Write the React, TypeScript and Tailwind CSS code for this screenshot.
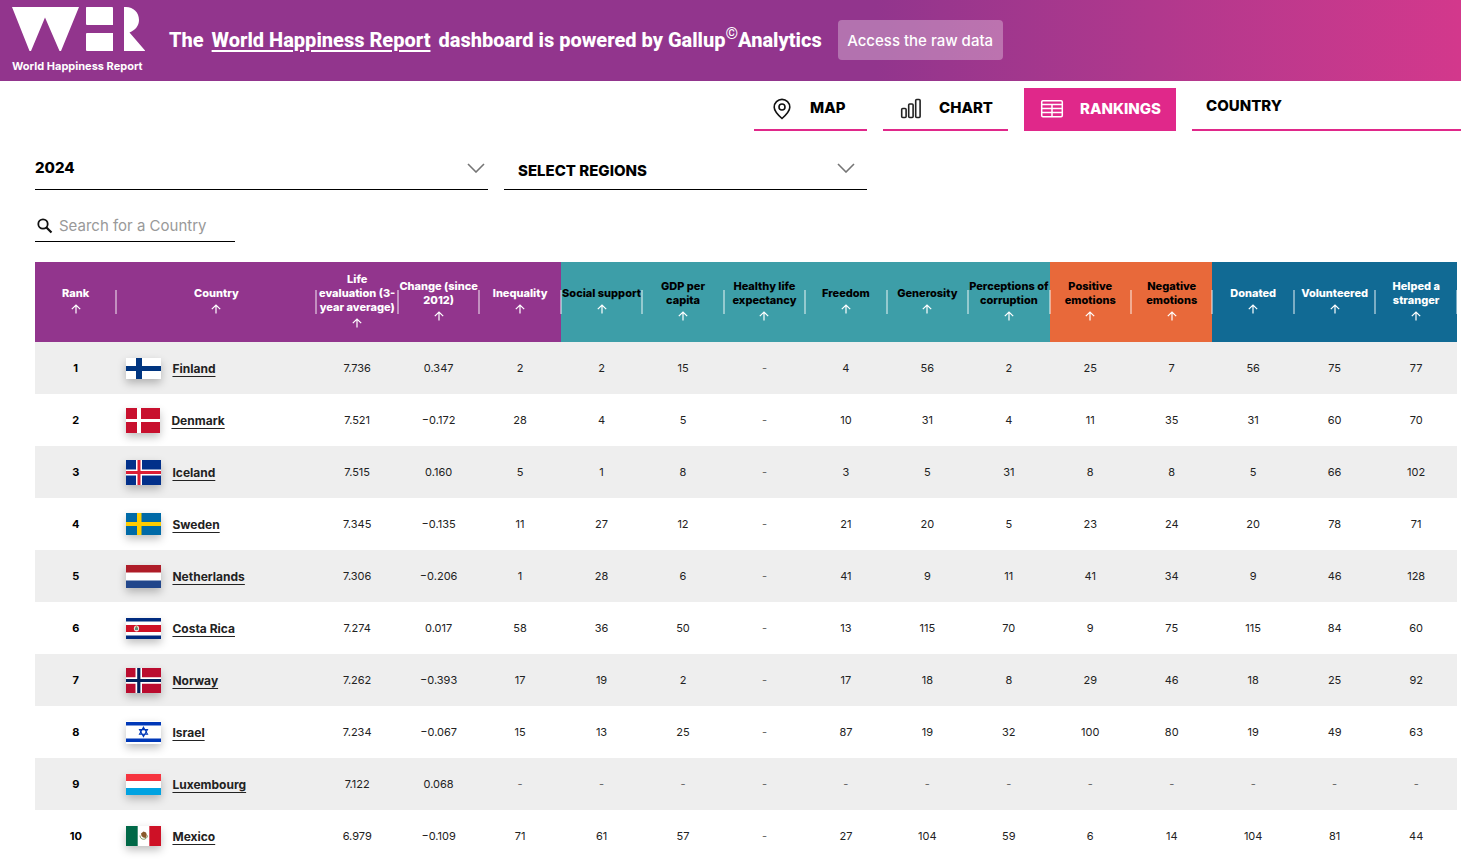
import type { ReactNode } from 'react';

const columns = [
  { lines: ['Rank'], cls: 'bg-[#92358d] text-white' },
  { lines: ['Country'], cls: 'bg-[#92358d] text-white' },
  { lines: ['Life', 'evaluation (3-', 'year average)'], cls: 'bg-[#92358d] text-white' },
  { lines: ['Change (since', '2012)'], cls: 'bg-[#92358d] text-white' },
  { lines: ['Inequality'], cls: 'bg-[#92358d] text-white' },
  { lines: ['Social support'], cls: 'bg-[#3d9ea8] text-black' },
  { lines: ['GDP per', 'capita'], cls: 'bg-[#3d9ea8] text-black' },
  { lines: ['Healthy life', 'expectancy'], cls: 'bg-[#3d9ea8] text-black' },
  { lines: ['Freedom'], cls: 'bg-[#3d9ea8] text-black' },
  { lines: ['Generosity'], cls: 'bg-[#3d9ea8] text-black' },
  { lines: ['Perceptions of', 'corruption'], cls: 'bg-[#3d9ea8] text-black' },
  { lines: ['Positive', 'emotions'], cls: 'bg-[#e8693a] text-black' },
  { lines: ['Negative', 'emotions'], cls: 'bg-[#e8693a] text-black' },
  { lines: ['Donated'], cls: 'bg-[#116a94] text-white' },
  { lines: ['Volunteered'], cls: 'bg-[#116a94] text-white' },
  { lines: ['Helped a', 'stranger'], cls: 'bg-[#116a94] text-white' },
];

const rows = [
  { country: 'Finland', values: ['7.736', '0.347', '2', '2', '15', '-', '4', '56', '2', '25', '7', '56', '75', '77'] },
  { country: 'Denmark', values: ['7.521', '−0.172', '28', '4', '5', '-', '10', '31', '4', '11', '35', '31', '60', '70'] },
  { country: 'Iceland', values: ['7.515', '0.160', '5', '1', '8', '-', '3', '5', '31', '8', '8', '5', '66', '102'] },
  { country: 'Sweden', values: ['7.345', '−0.135', '11', '27', '12', '-', '21', '20', '5', '23', '24', '20', '78', '71'] },
  { country: 'Netherlands', values: ['7.306', '−0.206', '1', '28', '6', '-', '41', '9', '11', '41', '34', '9', '46', '128'] },
  { country: 'Costa Rica', values: ['7.274', '0.017', '58', '36', '50', '-', '13', '115', '70', '9', '75', '115', '84', '60'] },
  { country: 'Norway', values: ['7.262', '−0.393', '17', '19', '2', '-', '17', '18', '8', '29', '46', '18', '25', '92'] },
  { country: 'Israel', values: ['7.234', '−0.067', '15', '13', '25', '-', '87', '19', '32', '100', '80', '19', '49', '63'] },
  { country: 'Luxembourg', values: ['7.122', '0.068', '-', '-', '-', '-', '-', '-', '-', '-', '-', '-', '-', '-'] },
  { country: 'Mexico', values: ['6.979', '−0.109', '71', '61', '57', '-', '27', '104', '59', '6', '14', '104', '81', '44'] },
];

const flags: Record<string, { w: number; h: number; art: ReactNode }> = {
  Finland: {
    w: 35,
    h: 21,
    art: (
      <>
        <path fill="#fff" d="M0 0h35v21H0z" />
        <path fill="#003580" d="M10 0h6v21h-6zM0 8h35v5H0z" />
      </>
    ),
  },
  Denmark: {
    w: 34,
    h: 25,
    art: (
      <>
        <path fill="#c8102e" d="M0 0h34v25H0z" />
        <path fill="#fff" d="M11 0h4v25h-4zM0 11h34v3H0z" />
      </>
    ),
  },
  Iceland: {
    w: 35,
    h: 25,
    art: (
      <>
        <path fill="#02308a" d="M0 0h35v25H0z" />
        <path fill="#fff" d="M10 0h6v25h-6zM0 9.5h35v6H0z" />
        <path fill="#dc1e35" d="M11.5 0h3v25h-3zM0 11h35v3H0z" />
      </>
    ),
  },
  Sweden: {
    w: 35,
    h: 22,
    art: (
      <>
        <path fill="#006aa7" d="M0 0h35v22H0z" />
        <path fill="#fecc00" d="M11 0h4.5v22H11zM0 9h35v4H0z" />
      </>
    ),
  },
  Netherlands: {
    w: 35,
    h: 23,
    art: (
      <>
        <path fill="#fff" d="M0 0h35v23H0z" />
        <path fill="#ae1c28" d="M0 0h35v7.6H0z" />
        <path fill="#21468b" d="M0 15.4h35V23H0z" />
      </>
    ),
  },
  'Costa Rica': {
    w: 35,
    h: 21,
    art: (
      <>
        <path fill="#fff" d="M0 0h35v21H0z" />
        <path fill="#002b7f" d="M0 0h35v3.5H0zM0 17.5h35V21H0z" />
        <path fill="#ce1126" d="M0 7h35v7H0z" />
        <ellipse cx="10.5" cy="10.5" rx="2.6" ry="3" fill="#e8e4dc" />
        <path fill="#5a8f7b" d="M9 9.5h3v2.5H9z" />
        <path fill="#8a7a3a" d="M9.8 8.3h1.4v1.6H9.8z" />
      </>
    ),
  },
  Norway: {
    w: 35,
    h: 25,
    art: (
      <>
        <path fill="#ba0c2f" d="M0 0h35v25H0z" />
        <path fill="#fff" d="M9.5 0H16v25H9.5zM0 9.3h35v6.4H0z" />
        <path fill="#00205b" d="M11.2 0h3.2v25h-3.2zM0 11h35v3H0z" />
      </>
    ),
  },
  Israel: {
    w: 35,
    h: 23,
    art: (
      <>
        <path fill="#fff" d="M0 0h35v23H0z" />
        <path fill="#0038b8" d="M0 1h35v3.5H0zM0 17.5h35V21H0z" />
        <path fill="none" stroke="#0038b8" strokeWidth="1.1" d="M17.5 6.2l4 7h-8zM17.5 15.6l4-7h-8z" />
      </>
    ),
  },
  Luxembourg: {
    w: 35,
    h: 21,
    art: (
      <>
        <path fill="#fff" d="M0 0h35v21H0z" />
        <path fill="#f6343f" d="M0 0h35v7H0z" />
        <path fill="#00a2e1" d="M0 14h35v7H0z" />
      </>
    ),
  },
  Mexico: {
    w: 35,
    h: 20,
    art: (
      <>
        <path fill="#fff" d="M0 0h35v20H0z" />
        <path fill="#006847" d="M0 0h11.7v20H0z" />
        <path fill="#ce1126" d="M23.3 0H35v20H23.3z" />
        <path fill="none" stroke="#7c9a5c" strokeWidth="1" d="M14 9.5c0 5 7 5 7.5 0" />
        <path fill="#8a5a2b" d="M15 7.5l2.5-2 2.5 1 .8 2.5-1 3-2.5-.5-1.8-1.5z" />
      </>
    ),
  },
};

function Logo() {
  return (
    <a href="#" aria-label="World Happiness Report" className="flex w-[133px] flex-col gap-2 text-white">
      <svg viewBox="0 0 133 44" className="h-11 w-[133px]" fill="currentColor">
        <path d="M0 0h67L49 44h-1.5L33 10.5 19 44h-1.5z" />
        <path d="M74.5 0h25.5a1 1 0 0 1 1 1v17H75a1 1 0 0 1-1-1V.5zM75 26h26v18H75a1 1 0 0 1-1-1V27a1 1 0 0 1 1-1z" />
        <path d="M112 0h2c7.500 0 13 5.500 13 13 0 5.500-3.500 10-9.500 12.500L133 43.500v.5h-21z" />
      </svg>
      <span className="text-[11px] leading-[14px] font-bold whitespace-nowrap">World Happiness Report</span>
    </a>
  );
}

function Chevron({ className }: { className: string }) {
  return (
    <svg viewBox="0 0 18 10" className={`pointer-events-none absolute top-[17px] h-2.5 w-[18px] ${className}`} fill="none" stroke="#757575" strokeWidth="1.6">
      <path d="M1 1l8 8 8-8" />
    </svg>
  );
}

function SortArrow() {
  return (
    <svg viewBox="0 0 18 18" className="block size-[18px]" fill="none" stroke="#fff" strokeWidth="1.2">
      <path d="M9 13.500V5M4.800 9.200L9 5l4.200 4.200" />
    </svg>
  );
}

function Flag({ country }: { country: string }) {
  const { w, h, art } = flags[country];
  return (
    <svg width={w} height={h} viewBox={`0 0 ${w} ${h}`} className="shrink-0 shadow-[0_4px_8px_rgba(0,0,0,0.25)]">
      {art}
    </svg>
  );
}

export default function App() {
  return (
    <div className="h-screen overflow-hidden bg-white font-['Inter','Liberation_Sans',sans-serif] text-black">
      {/* Banner */}
      <header className="flex h-[81px] items-center bg-linear-to-r from-[#92358d] from-60% to-[#d3388c] px-3 pb-px">
        <Logo />
        <p className="ml-6 flex items-center gap-2 font-['Roboto','Liberation_Sans',sans-serif] text-xl font-extrabold whitespace-nowrap text-white">
          <span>The</span>
          <a href="#" className="underline decoration-2 underline-offset-3">World Happiness Report</a>
          <span>
            dashboard is powered by Gallup<sup className="-top-2 text-base font-normal">©</sup>Analytics
          </span>
        </p>
        <button className="ml-4 h-10 w-[165px] rounded bg-white/30 pt-0.5 text-[15px] font-medium whitespace-nowrap text-white">
          Access the raw data
        </button>
      </header>

      {/* View tabs */}
      <nav className="mt-[7px] flex h-[43px] justify-end gap-4 text-[15px] font-extrabold">
        <button className="flex w-[113px] items-center gap-4 border-b-2 border-[#e0288a] pl-4 whitespace-nowrap">
          <svg viewBox="0 0 24 24" className="size-6 shrink-0" fill="none" stroke="#111" strokeWidth="1.6">
            <path d="M12 21.500C7 17 4.200 13.800 4.200 10.200a7.800 7.800 0 0 1 15.600 0c0 3.600-2.800 6.800-7.800 11.300z" />
            <circle cx="12" cy="10" r="3" />
          </svg>
          MAP
        </button>
        <button className="flex w-[125px] items-center gap-4 border-b-2 border-[#e0288a] pl-4 whitespace-nowrap">
          <svg viewBox="0 0 24 24" className="size-6 shrink-0" fill="none" stroke="#222" strokeWidth="1.6">
            <rect x="2.700" y="11.500" width="4.400" height="9" rx="1" />
            <rect x="9.700" y="7" width="4.400" height="13.500" rx="1" />
            <rect x="16.700" y="2.500" width="4.400" height="18" rx="1" />
          </svg>
          CHART
        </button>
        <button className="flex w-[152px] items-center gap-4 bg-[#e0288a] pl-4 whitespace-nowrap text-white">
          <svg viewBox="0 0 24 24" className="size-6 shrink-0" fill="none" stroke="#fff" strokeWidth="1.5">
            <rect x="1.700" y="2.800" width="20.600" height="16" rx="1.200" />
            <path d="M2 6.500h20M2 10.500h20M2 14.500h20M12 6.500v12" />
          </svg>
          RANKINGS
        </button>
        <select aria-label="Country" className="w-[269px] appearance-none border-b-2 border-[#e0288a] pb-1 pl-3.5">
          <option>COUNTRY</option>
        </select>
      </nav>

      <main className="pr-1 pl-[35px]">
        {/* Filters */}
        <div className="mt-[15px] flex gap-4 text-[15px] font-extrabold">
          <div className="relative w-[453px]">
            <select aria-label="Year" className="h-11 w-full appearance-none border-b border-black pt-0.5">
              <option>2024</option>
            </select>
            <Chevron className="right-[3px]" />
          </div>
          <div className="relative w-[363px]">
            <select aria-label="Regions" className="h-11 w-full appearance-none border-b border-black pt-2 pl-3.5">
              <option>SELECT REGIONS</option>
            </select>
            <Chevron className="right-3" />
          </div>
        </div>

        <label className="mt-5 flex h-8 w-[200px] items-center border-b border-black">
          <svg viewBox="0 0 20 20" className="size-5 shrink-0" fill="none" stroke="#111">
            <circle cx="8" cy="8" r="4.700" strokeWidth="1.800" />
            <path d="M11.500 11.500l5 5" strokeWidth="2.200" />
          </svg>
          <input
            type="search"
            aria-label="Search for a Country"
            placeholder="Search for a Country"
            className="ml-1 w-full min-w-0 pt-0.5 text-[15px] outline-none placeholder:text-[#999]"
          />
        </label>

        {/* Rankings */}
        <table className="mt-5 w-full table-fixed text-center text-[11px]">
          <colgroup>
            {columns.map((col, i) => (
              <col key={i} className={i === 1 ? 'w-[200px]' : ''} />
            ))}
          </colgroup>
          <thead>
            <tr className="h-20">
              {columns.map((col, i) => (
                <th key={i} className={`relative p-0 leading-[14px] font-extrabold whitespace-nowrap ${col.cls}`}>
                  <div className="flex flex-col items-center">
                    {col.lines.map((line) => (
                      <span key={line}>{line}</span>
                    ))}
                    <SortArrow />
                  </div>
                  <span className="absolute top-7 -right-px z-10 h-6 w-0.5 bg-white/45" />
                </th>
              ))}
            </tr>
          </thead>
          <tbody className="text-[#222]">
            {rows.map((row, i) => (
              <tr key={row.country} className="h-13 odd:bg-[#eee]">
                <td className="p-0 font-bold text-black">{i + 1}</td>
                <td className="p-0">
                  <div className="flex items-center gap-[11px] pl-2.5">
                    <Flag country={row.country} />
                    <a href="#" className="pt-0.5 text-xs font-bold underline underline-offset-3">
                      {row.country}
                    </a>
                  </div>
                </td>
                {row.values.map((value, j) => (
                  <td key={j} className={value === '-' ? 'p-0 text-[#666]' : 'p-0'}>
                    {value}
                  </td>
                ))}
              </tr>
            ))}
          </tbody>
        </table>
      </main>
    </div>
  );
}
